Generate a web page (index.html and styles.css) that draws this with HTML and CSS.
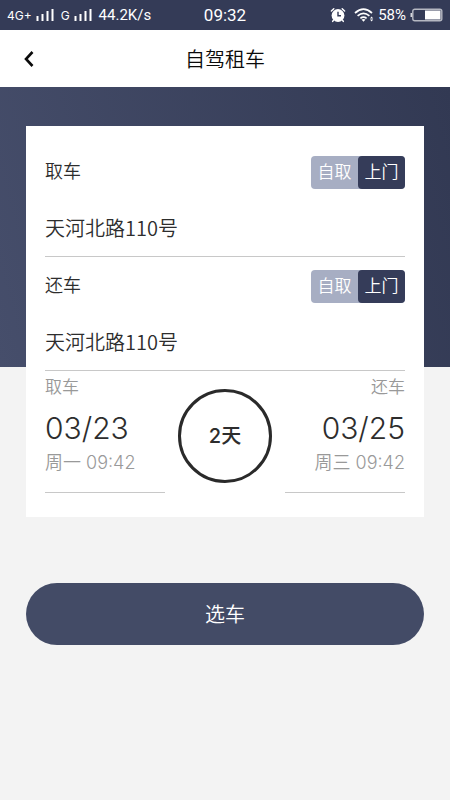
FILE: index.html
```html
<!DOCTYPE html>
<html lang="zh-CN">
<head>
<meta charset="utf-8">
<meta name="viewport" content="width=device-width, initial-scale=1">
<title>自驾租车</title>
<link rel="stylesheet" href="styles.css">
</head>
<body>
<div class="status">
  <div class="status-side">
    <span class="net">4G+</span>
    <svg class="bars" width="18" height="14" viewBox="0 0 18 14" aria-hidden="true"><path d="M1.5 13V8M6.5 13V6M11.5 13V3M16.5 13V1"/></svg>
    <span class="net carrier">G</span>
    <svg class="bars" width="18" height="14" viewBox="0 0 18 14" aria-hidden="true"><path d="M1.5 13V8M6.5 13V6M11.5 13V3M16.5 13V1"/></svg>
    <span class="speed">44.2K/s</span>
  </div>
  <time class="clock">09:32</time>
  <div class="status-side status-end">
    <svg width="16" height="16" viewBox="0 0 16 16" aria-hidden="true"><circle cx="8" cy="8.5" r="6.4" fill="#fff"/><path d="M1.4 4 3.8 1.8M14.6 4 12.2 1.8M3.5 13.2 2.7 14.4M12.5 13.2l.8 1.2" stroke="#fff" stroke-width="1.5" stroke-linecap="round"/><path d="M8 4.8v4h3" fill="none" stroke="#343b57" stroke-width="1.4"/></svg>
    <svg class="wifi" width="20" height="14" viewBox="0 0 20 14" aria-hidden="true"><path d="M1 5Q9.5 -2.6 18 5M3.6 7.9Q9.5 2.8 15.4 7.9M6.4 10.3Q9.5 7.8 12.6 10.3" fill="none" stroke="#fff" stroke-width="1.7"/><path d="M7.5 11.6Q9.500 10.2 11.5 11.6L9.5 13.8ZM16 10.4 17.6 8.400 19.2 10.4ZM16 11.6h3.2l-1.6 2Z" fill="#fff"/></svg>
    <span class="percent">58%</span>
    <svg class="battery" width="33" height="14" viewBox="0 0 33 14" aria-hidden="true"><rect x="2.8" y="1.2" width="29" height="11.6" rx="2" fill="none" stroke="#b5b8c2" stroke-width="1.4"/><path d="M0.5 5h1.6v4H0.5Z" fill="#d5d7dd"/><rect x="15" y="2.5" width="15.5" height="9" fill="#fff"/></svg>
  </div>
</div>
<header class="topbar">
  <button class="back" type="button" aria-label="返回"><svg width="12" height="18" viewBox="0 0 12 18" aria-hidden="true"><path d="M9.5 2 3 9l6.5 7" fill="none" stroke="#0b0b0b" stroke-width="2.6"/></svg></button>
  <h1>自驾租车</h1>
</header>
<main>
  <form>
    <div class="card">
      <section class="place">
        <div class="place-head">
          <label for="pickup">取车</label>
          <div class="toggle"><button type="button" aria-pressed="false">自取</button><button class="on" type="button" aria-pressed="true">上门</button></div>
        </div>
        <input id="pickup" type="text" value="天河北路110号">
      </section>
      <section class="place">
        <div class="place-head">
          <label for="dropoff">还车</label>
          <div class="toggle"><button type="button" aria-pressed="false">自取</button><button class="on" type="button" aria-pressed="true">上门</button></div>
        </div>
        <input id="dropoff" type="text" value="天河北路110号">
      </section>
      <section class="dates">
        <div class="date">
          <span class="caption">取车</span>
          <strong>03/23</strong>
          <span class="when">周一 09:42</span>
        </div>
        <div class="days">2天</div>
        <div class="date date-end">
          <span class="caption">还车</span>
          <strong>03/25</strong>
          <span class="when">周三 09:42</span>
        </div>
      </section>
    </div>
    <button class="submit" type="button">选车</button>
  </form>
</main>
</body>
</html>
```
FILE: styles.css
```css
* { box-sizing: border-box; }

body {
  margin: 0;
  min-height: 100vh;
  background: #f3f3f3;
  color: #2d2d2d;
  font-family: Inter, "Noto Sans CJK SC", sans-serif;
  font-weight: 350;
}

button, input { font: inherit; color: inherit; }
button { border: 0; padding: 0; }

.status {
  display: grid;
  grid-template-columns: 1fr auto 1fr;
  align-items: center;
  height: 30px;
  padding: 0 7px;
  background: #343b57;
  color: #fff;
  font-family: Roboto, sans-serif;
  font-weight: 400;
}
.status-side { display: flex; align-items: center; gap: 4px; white-space: nowrap; }
.status-end { justify-content: flex-end; }
.net { font-size: 12px; font-family: Inter, sans-serif; }
.carrier { margin-left: 3px; }
.speed { margin-left: 3px; font-size: 15px; }
.clock { font-size: 17px; }
.percent { font-size: 15px; }
.wifi { margin-left: 4px; }
.bars { fill: none; stroke: #fff; stroke-width: 2; }

.topbar {
  display: grid;
  grid-template-columns: 40px 1fr 40px;
  align-items: center;
  height: 57px;
  padding: 0 9px;
  background: #fff;
}
.back { display: grid; place-items: center; height: 40px; background: none; }
.topbar h1 {
  margin: 0;
  color: #0b0b0b;
  font-size: 20px;
  font-weight: 350;
  text-align: center;
}

main {
  padding: 39px 26px;
  background: linear-gradient(75deg, #464e6b, #323953) no-repeat 0 0 / 100% 280px;
}
.card { padding: 17px 19px 24px; background: #fff; }

.place { border-bottom: 1px solid #c8c8c8; padding-top: 13px; }
.place-head {
  display: flex;
  align-items: flex-start;
  justify-content: space-between;
  height: 33px;
  font-size: 18px;
  line-height: 32px;
}
.toggle { display: flex; border-radius: 4px; background: #a7aec3; color: #fff; }
.toggle button {
  width: 47px;
  height: 33px;
  padding-bottom: 2px;
  border-radius: 4px;
  background: none;
  font-size: 17px;
}
.toggle .on { background: #353c59; }
.place input {
  display: block;
  width: 100%;
  height: 40px;
  margin: 18px 0 9px;
  padding: 0;
  border: 0;
  background: none;
  font-family: "Noto Sans CJK SC", sans-serif;
  font-size: 20px;
}

.dates {
  display: grid;
  grid-template-columns: 1fr auto 1fr;
  gap: 13px;
  align-items: center;
}
.date {
  display: flex;
  flex-direction: column;
  height: 122px;
  padding-top: 4px;
  border-bottom: 1px solid #c8c8c8;
  white-space: nowrap;
}
.date-end { text-align: right; }
.caption { color: #999; font-size: 17px; line-height: 24px; }
.date strong { font-size: 30px; font-weight: 300; line-height: 58px; }
.when { color: #999; font-size: 18px; line-height: 12px; }
.days {
  display: grid;
  place-items: center;
  width: 94px;
  height: 94px;
  margin-top: 8px;
  padding-bottom: 4px;
  border: 3px solid #2a2a2a;
  border-radius: 50%;
  font-size: 20px;
  font-weight: 500;
}

.submit {
  display: block;
  width: 100%;
  height: 62px;
  margin-top: 66px;
  padding-bottom: 2px;
  border-radius: 31px;
  background: #434b66;
  color: #fff;
  font-size: 20px;
}
```
